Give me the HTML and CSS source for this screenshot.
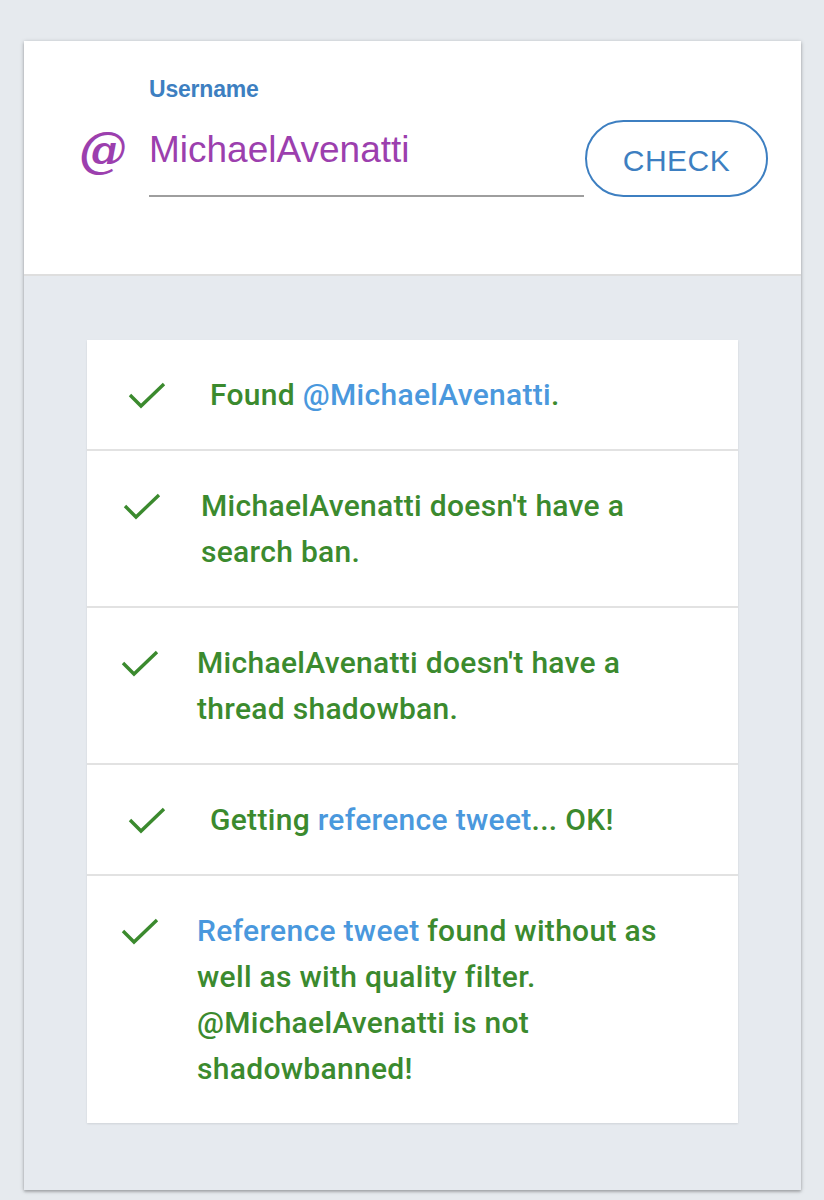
FILE: index.html
```html
<!DOCTYPE html>
<html>
<head>
<meta charset="utf-8">
<link rel="stylesheet" href="styles.css">
</head>
<body>
<div class="card">
  <div class="header">
    <div class="at">@</div>
    <div class="field">
      <div class="label">Username</div>
      <div class="input">MichaelAvenatti</div>
    </div>
    <button class="check-btn">CHECK</button>
  </div>
  <div class="body">
    <ul class="results">
      <li class="row row--a">
        <span class="icon"><svg width="40" height="30" viewBox="0 0 40 30"><polyline points="3,15 14,26 37,4" fill="none" stroke="#3b8a2e" stroke-width="3.4"/></svg></span>
        <span class="text">Found <span class="link">@MichaelAvenatti</span>.</span>
      </li>
      <li class="row row--b">
        <span class="icon"><svg width="40" height="30" viewBox="0 0 40 30"><polyline points="3,15 14,26 37,4" fill="none" stroke="#3b8a2e" stroke-width="3.4"/></svg></span>
        <span class="text">MichaelAvenatti doesn't have a search ban.</span>
      </li>
      <li class="row row--c">
        <span class="icon"><svg width="40" height="30" viewBox="0 0 40 30"><polyline points="3,15 14,26 37,4" fill="none" stroke="#3b8a2e" stroke-width="3.4"/></svg></span>
        <span class="text">MichaelAvenatti doesn't have a thread shadowban.</span>
      </li>
      <li class="row row--a">
        <span class="icon"><svg width="40" height="30" viewBox="0 0 40 30"><polyline points="3,15 14,26 37,4" fill="none" stroke="#3b8a2e" stroke-width="3.4"/></svg></span>
        <span class="text">Getting <span class="link">reference tweet</span>... OK!</span>
      </li>
      <li class="row row--c">
        <span class="icon"><svg width="40" height="30" viewBox="0 0 40 30"><polyline points="3,15 14,26 37,4" fill="none" stroke="#3b8a2e" stroke-width="3.4"/></svg></span>
        <span class="text"><span class="link">Reference tweet</span> found without as well as with quality filter. @MichaelAvenatti is not shadowbanned!</span>
      </li>
    </ul>
  </div>
</div>
</body>
</html>
```

FILE: styles.css
```css
html, body {
  margin: 0;
  padding: 0;
  background: #e6eaee;
}
body {
  padding-top: 41px;
  padding-bottom: 10px;
  font-family: "Liberation Sans", Arial, sans-serif;
}
.card {
  margin-left: 24px;
  width: 777px;
  background: #e6eaef;
  box-shadow: 0 1px 4px rgba(0,0,0,0.28), 0 2px 2px rgba(0,0,0,0.12);
}
.header {
  background: #fff;
  height: 235px;
  box-sizing: border-box;
  padding: 36px 33px 0 55px;
  display: flex;
  align-items: flex-start;
  border-bottom: 2px solid #dedede;
}
.at {
  width: 70px;
  margin-top: 48px;
  font-family: "DejaVu Serif", "Liberation Serif", serif;
  font-weight: bold;
  font-style: italic;
  font-size: 48px;
  line-height: 50px;
  color: #9c3fae;
}
.field {
  flex: 1;
  display: flex;
  flex-direction: column;
}
.label {
  font-size: 23px;
  line-height: 24px;
  font-weight: bold;
  color: #3d7fc1;
  letter-spacing: -0.2px;
}
.input {
  margin-top: 29px;
  font-size: 37px;
  line-height: 40px;
  color: #9c3fae;
  padding-bottom: 25px;
  border-bottom: 2px solid #9e9e9e;
}
.check-btn {
  margin-top: 43px;
  margin-left: 1px;
  width: 183px;
  height: 77px;
  box-sizing: border-box;
  border: 2px solid #3d7fc1;
  border-radius: 40px;
  background: #fff;
  color: #3d7fc1;
  font-family: "Liberation Sans", Arial, sans-serif;
  font-size: 30px;
  letter-spacing: 0.5px;
  padding: 4px 0 0;
}
.body {
  padding: 64px 63px 67px;
}
.results {
  list-style: none;
  margin: 0;
  padding: 0;
  background: #fff;
  box-shadow: 0 1px 2px rgba(0,0,0,0.1);
}
.row {
  display: flex;
  align-items: flex-start;
  padding: 31.5px 48px 31.5px 0;
  border-bottom: 2px solid #e2e2e2;
  font-family: Roboto, "Liberation Sans", sans-serif;
  font-weight: 500;
  font-size: 30px;
  letter-spacing: 0.3px;
  line-height: 46px;
  color: #3b8a2e;
}
.row:last-child {
  border-bottom: none;
}
.icon {
  flex: none;
  display: flex;
  align-items: center;
  height: 46px;
}
.icon svg {
  display: block;
}
.row--a .icon { margin-left: 40px; width: 83px; }
.row--b .icon { margin-left: 35px; width: 79px; }
.row--c .icon { margin-left: 33px; width: 77px; }
.link {
  color: #4a98dd;
}
```
